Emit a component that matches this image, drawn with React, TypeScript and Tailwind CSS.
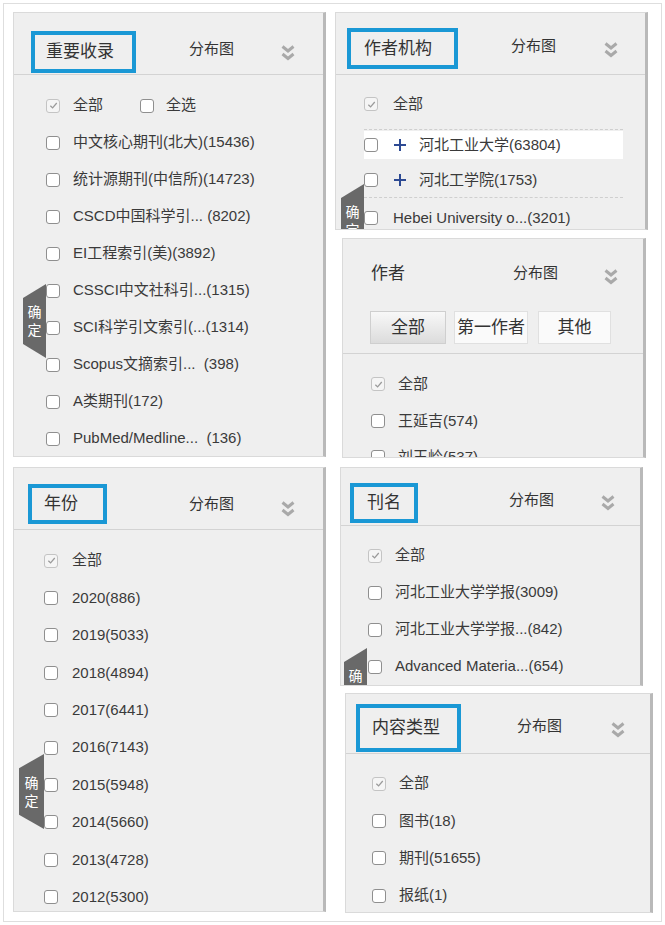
import React from "react";

function Box({ checked }: { checked?: boolean }) {
  return checked ? (
    <span className="flex h-[14px] w-[14px] shrink-0 items-center justify-center rounded-[3px] border border-[#c4c4c4] bg-[#f5f5f5]">
      <svg viewBox="0 0 10 10" className="h-[9px] w-[9px]">
        <path d="M1.5 5.2 L4 7.6 L8.6 2.2" fill="none" stroke="#9a9a9a" strokeWidth="1.4" />
      </svg>
    </span>
  ) : (
    <span className="block h-[14px] w-[14px] shrink-0 rounded-[3px] border border-[#8f8f8f] bg-white" />
  );
}

function Chevron({ cls }: { cls: string }) {
  return (
    <svg viewBox="0 0 14 18" className={`h-[18px] w-[14px] shrink-0 ${cls}`}>
      <path d="M1.5 2.5 L7 7 L12.5 2.5" fill="none" stroke="#a9a9a9" strokeWidth="3" />
      <path d="M1.5 10 L7 14.5 L12.5 10" fill="none" stroke="#a9a9a9" strokeWidth="3" />
    </svg>
  );
}

function Plus() {
  return (
    <svg viewBox="0 0 12 12" className="block h-[12px] w-[12px] shrink-0">
      <path d="M0 6 H12 M6 0 V12" stroke="#2d4a93" strokeWidth="2" />
    </svg>
  );
}

function Confirm({ cls }: { cls: string }) {
  return (
    <div
      className={`absolute flex flex-col items-center justify-center bg-[#696969] text-[14px] leading-[18px] text-white [clip-path:polygon(100%_0,100%_100%,0_81%,0_19%)] ${cls}`}
    >
      <span>确</span>
      <span>定</span>
    </div>
  );
}

function Row({ cls, gap, checked, label }: { cls: string; gap: string; checked?: boolean; label: string }) {
  return (
    <div className={`flex items-center ${cls}`}>
      <Box checked={checked} />
      <span className={`whitespace-pre ${gap}`}>{label}</span>
    </div>
  );
}

const panel =
  "relative overflow-hidden border border-[#dadada] border-r-[3px] border-r-[#b9b9b9] bg-[#efefef] text-[#3a3a3a]";

const titleBox = "flex items-center border-4 border-[#1a98d5] text-[17px] text-[#333]";

function PanelA() {
  const items = [
    "中文核心期刊(北大)(15436)",
    "统计源期刊(中信所)(14723)",
    "CSCD中国科学引... (8202)",
    "EI工程索引(美)(3892)",
    "CSSCI中文社科引...(1315)",
    "SCI科学引文索引(...(1314)",
    "Scopus文摘索引...  (398)",
    "A类期刊(172)",
    "PubMed/Medline...  (136)",
  ];
  return (
    <div className={`${panel} h-[445px] w-[313px]`}>
      <div className="flex h-[62px] items-start border-b border-[#d3d3d3]">
        <div className={`${titleBox} ml-[17px] mt-[18px] h-[42px] w-[105px] pl-[11px]`}>重要收录</div>
        <div className="ml-[53px] mt-[26px] text-[15px] leading-[20px] text-[#333]">分布图</div>
        <Chevron cls="ml-[47px] mt-[31px]" />
      </div>
      <div className="pt-[12px] text-[15px]">
        <div className="flex h-[37px] items-center pl-[32px]">
          <Box checked />
          <span className="ml-[13px]">全部</span>
          <span className="ml-[37px] flex">
            <Box />
          </span>
          <span className="ml-[12px]">全选</span>
        </div>
        {items.map((t) => (
          <Row key={t} cls="h-[37px] pl-[32px]" gap="ml-[13px]" label={t} />
        ))}
      </div>
      <Confirm cls="left-[9px] top-[271px] h-[74px] w-[23px]" />
    </div>
  );
}

function PanelC() {
  const items = [
    "2020(886)",
    "2019(5033)",
    "2018(4894)",
    "2017(6441)",
    "2016(7143)",
    "2015(5948)",
    "2014(5660)",
    "2013(4728)",
    "2012(5300)",
  ];
  return (
    <div className={`${panel} h-[445px] w-[313px]`}>
      <div className="flex h-[62px] items-start border-b border-[#d3d3d3]">
        <div className={`${titleBox} ml-[14px] mt-[16px] h-[40px] w-[79px] pl-[12px]`}>年份</div>
        <div className="ml-[82px] mt-[26px] text-[15px] leading-[20px] text-[#333]">分布图</div>
        <Chevron cls="ml-[47px] mt-[32px]" />
      </div>
      <div className="pt-[12px] text-[15px]">
        <Row cls="h-[37.4px] pl-[30px]" gap="ml-[14px]" checked label="全部" />
        {items.map((t) => (
          <Row key={t} cls="h-[37.4px] pl-[30px]" gap="ml-[14px]" label={t} />
        ))}
      </div>
      <Confirm cls="left-[5px] top-[286px] h-[75px] w-[25px]" />
    </div>
  );
}

function PanelB() {
  return (
    <div className={`${panel} h-[218px] w-[313px]`}>
      <div className="flex h-[62px] items-start border-b border-[#d3d3d3]">
        <div className={`${titleBox} ml-[11px] mt-[15px] h-[41px] w-[111px] pl-[13px]`}>作者机构</div>
        <div className="ml-[53px] mt-[23px] text-[15px] leading-[20px] text-[#333]">分布图</div>
        <Chevron cls="ml-[48px] mt-[28px]" />
      </div>
      <div className="pt-[12px] text-[15px]">
        <Row cls="h-[34px] pl-[28px]" gap="ml-[15px]" checked label="全部" />
        <div className="ml-[28px] mt-[8px] w-[259px] border-t border-dashed border-[#cfcfcf] pt-[1px]">
          <div className="flex h-[28px] items-center bg-white">
            <Box />
            <span className="ml-[16px] flex">
              <Plus />
            </span>
            <span className="ml-[13px]">河北工业大学(63804)</span>
          </div>
        </div>
        <div className="ml-[28px] flex h-[39px] w-[259px] items-center border-b border-dashed border-[#cfcfcf] pt-[4px]">
          <Box />
          <span className="ml-[16px] flex">
            <Plus />
          </span>
          <span className="ml-[13px]">河北工学院(1753)</span>
        </div>
        <Row cls="h-[40px] pl-[28px]" gap="ml-[15px]" label="Hebei University o...(3201)" />
      </div>
      <Confirm cls="left-[5px] top-[171px] h-[74px] w-[23px]" />
    </div>
  );
}

function PanelD() {
  return (
    <div className={`${panel} ml-[7px] mt-[8px] h-[220px] w-[304px]`}>
      <div className="flex h-[72px] items-start">
        <div className="ml-[28px] mt-[24px] text-[17px] leading-[22px] text-[#333]">作者</div>
        <div className="ml-[108px] mt-[24px] text-[15px] leading-[20px] text-[#333]">分布图</div>
        <Chevron cls="ml-[46px] mt-[29px]" />
      </div>
      <div className="flex h-[43px] items-start border-b border-[#d3d3d3] pl-[27px] text-[17px] text-[#333]">
        <div className="flex h-[33px] w-[76px] items-center justify-center border border-[#cfcfcf] bg-linear-to-b from-[#f8f8f8] to-[#dcdcdc]">
          全部
        </div>
        <div className="ml-[8px] flex h-[33px] w-[74px] items-center justify-center border border-[#e0e0e0] bg-[#fafafa]">
          第一作者
        </div>
        <div className="ml-[10px] flex h-[33px] w-[73px] items-center justify-center border border-[#e0e0e0] bg-[#fafafa]">
          其他
        </div>
      </div>
      <div className="pt-[12px] text-[15px]">
        <Row cls="h-[36.5px] pl-[28px]" gap="ml-[13px]" checked label="全部" />
        <Row cls="h-[36.5px] pl-[28px]" gap="ml-[13px]" label="王延吉(574)" />
        <Row cls="h-[36.5px] pl-[28px]" gap="ml-[13px]" label="刘玉岭(537)" />
      </div>
    </div>
  );
}

function PanelE() {
  return (
    <div className={`${panel} ml-[5px] mt-[9px] h-[219px] w-[303px]`}>
      <div className="flex h-[58px] items-start border-b border-[#d3d3d3]">
        <div className={`${titleBox} ml-[9px] mt-[15px] h-[40px] w-[68px] pl-[13px]`}>刊名</div>
        <div className="ml-[91px] mt-[22px] text-[15px] leading-[20px] text-[#333]">分布图</div>
        <Chevron cls="ml-[47px] mt-[26px]" />
      </div>
      <div className="pt-[11px] text-[15px]">
        <Row cls="h-[37px] pl-[27px]" gap="ml-[13px]" checked label="全部" />
        <Row cls="h-[37px] pl-[27px]" gap="ml-[13px]" label="河北工业大学学报(3009)" />
        <Row cls="h-[37px] pl-[27px]" gap="ml-[13px]" label="河北工业大学学报...(842)" />
        <Row cls="h-[37px] pl-[27px]" gap="ml-[13px]" label="Advanced Materia...(654)" />
      </div>
      <Confirm cls="left-[3px] top-[180px] h-[74px] w-[23px]" />
    </div>
  );
}

function PanelF() {
  return (
    <div className={`${panel} ml-[10px] mt-[7px] h-[220px] w-[308px]`}>
      <div className="flex h-[60px] items-start border-b border-[#d3d3d3]">
        <div className={`${titleBox} ml-[10px] mt-[10px] h-[48px] w-[105px] pl-[12px]`}>内容类型</div>
        <div className="ml-[56px] mt-[22px] text-[15px] leading-[20px] text-[#333]">分布图</div>
        <Chevron cls="ml-[49px] mt-[27px]" />
      </div>
      <div className="pt-[11px] text-[15px]">
        <Row cls="h-[37.3px] pl-[26px]" gap="ml-[13px]" checked label="全部" />
        <Row cls="h-[37.3px] pl-[26px]" gap="ml-[13px]" label="图书(18)" />
        <Row cls="h-[37.3px] pl-[26px]" gap="ml-[13px]" label="期刊(51655)" />
        <Row cls="h-[37.3px] pl-[26px]" gap="ml-[13px]" label="报纸(1)" />
      </div>
    </div>
  );
}

export default function App() {
  return (
    <div className="h-[925px] w-[665px] bg-white p-[3px] font-['Liberation_Sans','Noto_Sans_CJK_SC',sans-serif]">
      <div className="flex h-full w-full items-start border border-[#dedede]">
        <div className="ml-[9px] mt-[8px] flex w-[313px] shrink-0 flex-col gap-[10px]">
          <PanelA />
          <PanelC />
        </div>
        <div className="ml-[9px] mt-[8px] flex flex-col items-start">
          <PanelB />
          <PanelD />
          <PanelE />
          <PanelF />
        </div>
      </div>
    </div>
  );
}
